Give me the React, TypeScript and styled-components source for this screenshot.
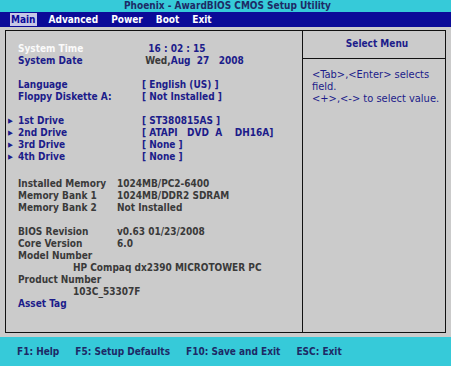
import React from 'react';
import styled, { createGlobalStyle } from 'styled-components';

const colors = {
  cyan: '#36cad9',
  navy: '#0b0b98',
  panel: '#cbcbcb',
  ink: '#1c1c8a',
  dark: '#3a3a3a',
  titleText: '#1d2a66',
};

const GlobalStyle = createGlobalStyle`
  html, body {
    margin: 0;
    padding: 0;
    background: ${colors.panel};
  }
  body {
    font-family: "DejaVu Sans", Verdana, sans-serif;
    font-stretch: condensed;
    font-weight: bold;
    font-size: 10px;
  }
`;

const Screen = styled.div`
  display: flex;
  flex-direction: column;
  width: 451px;
  height: 366px;
  background: ${colors.panel};
  overflow: hidden;
`;

const TitleBar = styled.div`
  height: 12px;
  line-height: 12px;
  background: ${colors.cyan};
  color: ${colors.titleText};
  text-align: center;
  font-size: 10px;
  padding-left: 4px;
`;

const MenuBar = styled.div`
  display: flex;
  align-items: center;
  height: 15px;
  padding-left: 10px;
  gap: 11px;
  background: ${colors.navy};
`;

const MenuItem = styled.div<{ $active?: boolean }>`
  font-size: 10px;
  line-height: 13px;
  padding: 0 1px;
  color: ${(p) => (p.$active ? colors.navy : '#ffffff')};
  background: ${(p) => (p.$active ? '#c6c6e6' : 'transparent')};
`;

const Body = styled.div`
  flex: 1;
  display: flex;
  padding: 3px 5px 4px 5px;
`;

const Frame = styled.div`
  flex: 1;
  display: grid;
  grid-template-columns: 1fr 143px;
  border: 1.5px solid #111;
`;

const MainPanel = styled.div`
  display: flex;
  flex-direction: column;
  padding: 12px 0 0 2px;
`;

const Row = styled.div<{ $gap?: number }>`
  display: flex;
  align-items: center;
  height: 12px;
  line-height: 12px;
  margin-top: ${(p) => p.$gap ?? 0}px;
`;

const Arrow = styled.span`
  width: 10px;
  flex: none;
  font-size: 7px;
  color: ${colors.ink};
`;

const Label = styled.span<{ $tone?: 'ink' | 'white' | 'dark'; $width: number }>`
  width: ${(p) => p.$width}px;
  flex: none;
  color: ${(p) => (p.$tone === 'white' ? '#fafafa' : p.$tone === 'dark' ? colors.dark : colors.ink)};
  white-space: pre;
`;

const Value = styled.span<{ $tone?: 'ink' | 'dark' }>`
  color: ${(p) => (p.$tone === 'dark' ? colors.dark : colors.ink)};
  white-space: pre;
`;

const Indented = styled.span`
  padding-left: 65px;
  color: ${colors.dark};
  white-space: pre;
`;

const HelpPanel = styled.div`
  display: flex;
  flex-direction: column;
  border-left: 1.5px solid #111;
`;

const HelpHeader = styled.div`
  height: 27px;
  line-height: 25px;
  text-align: center;
  padding-left: 6px;
  color: ${colors.ink};
  border-bottom: 1.5px solid #111;
`;

const HelpText = styled.div`
  padding: 10px 4px 0 9px;
  font-weight: normal;
  font-size: 11px;
  line-height: 12px;
  color: ${colors.ink};
`;

const Footer = styled.div`
  display: flex;
  align-items: center;
  height: 29px;
  padding-left: 17px;
  gap: 16px;
  background: ${colors.cyan};
  color: ${colors.titleText};
`;

const drives = [
  ['1st Drive', '[ ST380815AS ]'],
  ['2nd Drive', '[ ATAPI   DVD  A    DH16A]'],
  ['3rd Drive', '[ None ]'],
  ['4th Drive', '[ None ]'],
];

export default function App() {
  return (
    <Screen>
      <GlobalStyle />
      <TitleBar>Phoenix - AwardBIOS CMOS Setup Utility</TitleBar>
      <MenuBar>
        <MenuItem $active>Main</MenuItem>
        <MenuItem>Advanced</MenuItem>
        <MenuItem>Power</MenuItem>
        <MenuItem>Boot</MenuItem>
        <MenuItem>Exit</MenuItem>
      </MenuBar>
      <Body>
        <Frame>
          <MainPanel>
            <Row>
              <Arrow />
              <Label $tone="white" $width={124}>System Time</Label>
              <Value>{'  16 : 02 : 15'}</Value>
            </Row>
            <Row>
              <Arrow />
              <Label $width={124}>System Date</Label>
              <Value>
                {' '}
                <Value $tone="dark">Wed,</Value>Aug  27   2008
              </Value>
            </Row>
            <Row $gap={12}>
              <Arrow />
              <Label $width={124}>Language</Label>
              <Value>[ English (US) ]</Value>
            </Row>
            <Row>
              <Arrow />
              <Label $width={124}>Floppy Diskette A:</Label>
              <Value>[ Not Installed ]</Value>
            </Row>
            {drives.map(([name, val], i) => (
              <Row key={name} $gap={i === 0 ? 12 : 0}>
                <Arrow>▶</Arrow>
                <Label $width={124}>{name}</Label>
                <Value>{val}</Value>
              </Row>
            ))}
            <Row $gap={15}>
              <Arrow />
              <Label $tone="dark" $width={99}>Installed Memory</Label>
              <Value $tone="dark">1024MB/PC2-6400</Value>
            </Row>
            <Row>
              <Arrow />
              <Label $tone="dark" $width={99}>Memory Bank 1</Label>
              <Value $tone="dark">1024MB/DDR2 SDRAM</Value>
            </Row>
            <Row>
              <Arrow />
              <Label $tone="dark" $width={99}>Memory Bank 2</Label>
              <Value $tone="dark">Not Installed</Value>
            </Row>
            <Row $gap={12}>
              <Arrow />
              <Label $tone="dark" $width={99}>BIOS Revision</Label>
              <Value $tone="dark">v0.63 01/23/2008</Value>
            </Row>
            <Row>
              <Arrow />
              <Label $tone="dark" $width={99}>Core Version</Label>
              <Value $tone="dark">6.0</Value>
            </Row>
            <Row>
              <Arrow />
              <Label $tone="dark" $width={99}>Model Number</Label>
            </Row>
            <Row>
              <Indented>HP Compaq dx2390 MICROTOWER PC</Indented>
            </Row>
            <Row>
              <Arrow />
              <Label $tone="dark" $width={99}>Product Number</Label>
            </Row>
            <Row>
              <Indented>103C_53307F</Indented>
            </Row>
            <Row>
              <Arrow />
              <Label $width={99}>Asset Tag</Label>
            </Row>
          </MainPanel>
          <HelpPanel>
            <HelpHeader>Select Menu</HelpHeader>
            <HelpText>
              &lt;Tab&gt;,&lt;Enter&gt; selects
              <br />
              field.
              <br />
              &lt;+&gt;,&lt;-&gt; to select value.
            </HelpText>
          </HelpPanel>
        </Frame>
      </Body>
      <Footer>
        <span>F1: Help</span>
        <span>F5: Setup Defaults</span>
        <span>F10: Save and Exit</span>
        <span>ESC: Exit</span>
      </Footer>
    </Screen>
  );
}
